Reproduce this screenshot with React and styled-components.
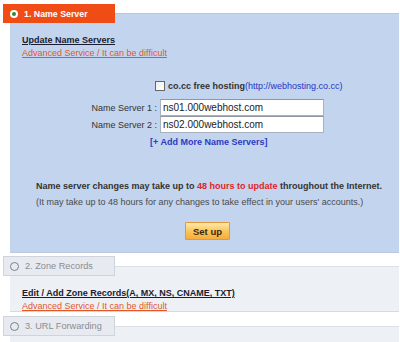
import React from "react";
import styled, { createGlobalStyle } from "styled-components";

const Global = createGlobalStyle`
  html, body { margin: 0; padding: 0; background: #fff; }
  body { font-family: "Liberation Sans", Arial, sans-serif; font-size: 9px; color: #333; }
`;

const Page = styled.div`
  width: 400px;
  height: 342px;
  overflow: hidden;
  padding-top: 4px;
  box-sizing: border-box;
  display: flex;
  flex-direction: column;
`;

const Section = styled.section`
  display: flex;
  flex-direction: column;
  margin-bottom: ${(p) => p.$gap || 0}px;
`;

const Tab = styled.div`
  position: relative;
  z-index: 2;
  margin-left: 3px;
  width: 112px;
  height: ${(p) => (p.$active ? 19 : 20)}px;
  margin-bottom: -10px;
  box-sizing: border-box;
  display: flex;
  align-items: center;
  gap: 6px;
  padding-left: ${(p) => (p.$active ? 7 : 6)}px;
  white-space: nowrap;
  background: ${(p) => (p.$active ? "#f04c16" : "#e7eaf0")};
  border: ${(p) => (p.$active ? "none" : "1px solid #cfd3da")};
  color: ${(p) => (p.$active ? "#fff" : "#8a8d93")};
  font-weight: ${(p) => (p.$active ? "bold" : "normal")};
  font-size: ${(p) => (p.$active ? 8.8 : 9.2)}px;
`;

const Radio = styled.span`
  flex: none;
  width: ${(p) => (p.$on ? 8 : 9)}px;
  height: ${(p) => (p.$on ? 8 : 9)}px;
  border-radius: 50%;
  box-sizing: border-box;
  display: flex;
  align-items: center;
  justify-content: center;
  background: ${(p) => (p.$on ? "#fff" : "transparent")};
  border: ${(p) => (p.$on ? "none" : "1.5px solid #7d8088")};
  &::after {
    content: "";
    width: 4px;
    height: 4px;
    border-radius: 50%;
    background: ${(p) => (p.$on ? "#2f8a3a" : "transparent")};
  }
`;

const Panel = styled.div`
  margin-left: 10px;
  margin-right: 1px;
  background: ${(p) => (p.$active ? "#c3d4ee" : "#edf0f5")};
  border-top: 1px solid ${(p) => (p.$active ? "#b6c6e0" : "#dcdfe6")};
  border-bottom: ${(p) => (p.$active ? "1px solid #b9c9e3" : "1px solid #d6d9df")};
  height: ${(p) => p.$h}px;
  box-sizing: border-box;
  padding: ${(p) => p.$pt || 0}px 0 0 12px;
  display: flex;
  flex-direction: column;
  align-items: flex-start;
`;

const Title = styled.a`
  font-weight: bold;
  color: #1c1c30;
  text-decoration: underline;
  line-height: 13px;
`;

const Warn = styled.a`
  color: #e2562a;
  text-decoration: underline;
  line-height: 13px;
`;

const CheckRow = styled.label`
  display: flex;
  align-items: center;
  gap: 3px;
  margin: 20px 0 0 133px;
  font-weight: bold;
  color: #333;
  height: 12px;
`;

const Box = styled.span`
  width: 8px;
  height: 8px;
  border: 1px solid #666;
  background: linear-gradient(135deg, #eee, #fff);
`;

const Url = styled.span`
  font-weight: normal;
  color: #2436c4;
`;

const Rows = styled.div`
  display: grid;
  grid-template-columns: 67px 164px;
  column-gap: 3px;
  align-items: center;
  margin: 7px 0 0 68px;
`;

const Label = styled.span`
  text-align: right;
  color: #333;
  white-space: nowrap;
`;

const Input = styled.div`
  height: 17px;
  box-sizing: border-box;
  background: #fff;
  border: 1px solid #aab2be;
  border-top-color: #8f97a4;
  font-size: 10px;
  line-height: 15px;
  padding-left: 2px;
  color: #222;
`;

const AddMore = styled.a`
  margin: 3px 0 0 128px;
  line-height: 12px;
  font-weight: bold;
  color: #2a3bc4;
`;

const Notice = styled.div`
  margin: 30px 0 0 14px;
  display: flex;
  flex-direction: column;
  align-items: flex-start;
  line-height: 16px;
`;

const Strong = styled.div`
  font-weight: bold;
  color: #333;
`;

const Red = styled.span`
  color: #e01e2a;
`;

const Sub = styled.div`
  color: #4a4a4a;
`;

const Button = styled.button`
  margin: 12px 0 0 149px;
  width: 45px;
  height: 18px;
  padding: 0;
  font-family: "Liberation Sans", Arial, sans-serif;
  font-weight: bold;
  font-size: 9.5px;
  color: #3a2a10;
  background: linear-gradient(#ffe9a6, #fbc25a 55%, #f7ad3a);
  border: 1px solid #e09a3c;
  border-radius: 1px;
`;

export default function App() {
  return (
    <Page>
      <Global />
      <Section $gap={3}>
        <Tab $active>
          <Radio $on />
          1. Name Server
        </Tab>
        <Panel $active $h={240} $pt={20}>
          <Title>Update Name Servers</Title>
          <Warn>Advanced Service / It can be difficult</Warn>
          <CheckRow>
            <Box />
            <span>
              co.cc free hosting<Url>(http://webhosting.co.cc)</Url>
            </span>
          </CheckRow>
          <Rows>
            <Label>Name Server 1 :</Label>
            <Input>ns01.000webhost.com</Input>
            <Label>Name Server 2 :</Label>
            <Input>ns02.000webhost.com</Input>
          </Rows>
          <AddMore>[+ Add More Name Servers]</AddMore>
          <Notice>
            <Strong>
              Name server changes may take up to <Red>48 hours to update</Red> throughout the Internet.
            </Strong>
            <Sub>(It may take up to 48 hours for any changes to take effect in your users' accounts.)</Sub>
            <Button>Set up</Button>
          </Notice>
        </Panel>
      </Section>
      <Section $gap={4}>
        <Tab>
          <Radio />
          2. Zone Records
        </Tab>
        <Panel $h={46} $pt={20}>
          <Title>Edit / Add Zone Records(A, MX, NS, CNAME, TXT)</Title>
          <Warn>Advanced Service / It can be difficult</Warn>
        </Panel>
      </Section>
      <Section>
        <Tab>
          <Radio />
          3. URL Forwarding
        </Tab>
        <Panel $h={40} />
      </Section>
    </Page>
  );
}
